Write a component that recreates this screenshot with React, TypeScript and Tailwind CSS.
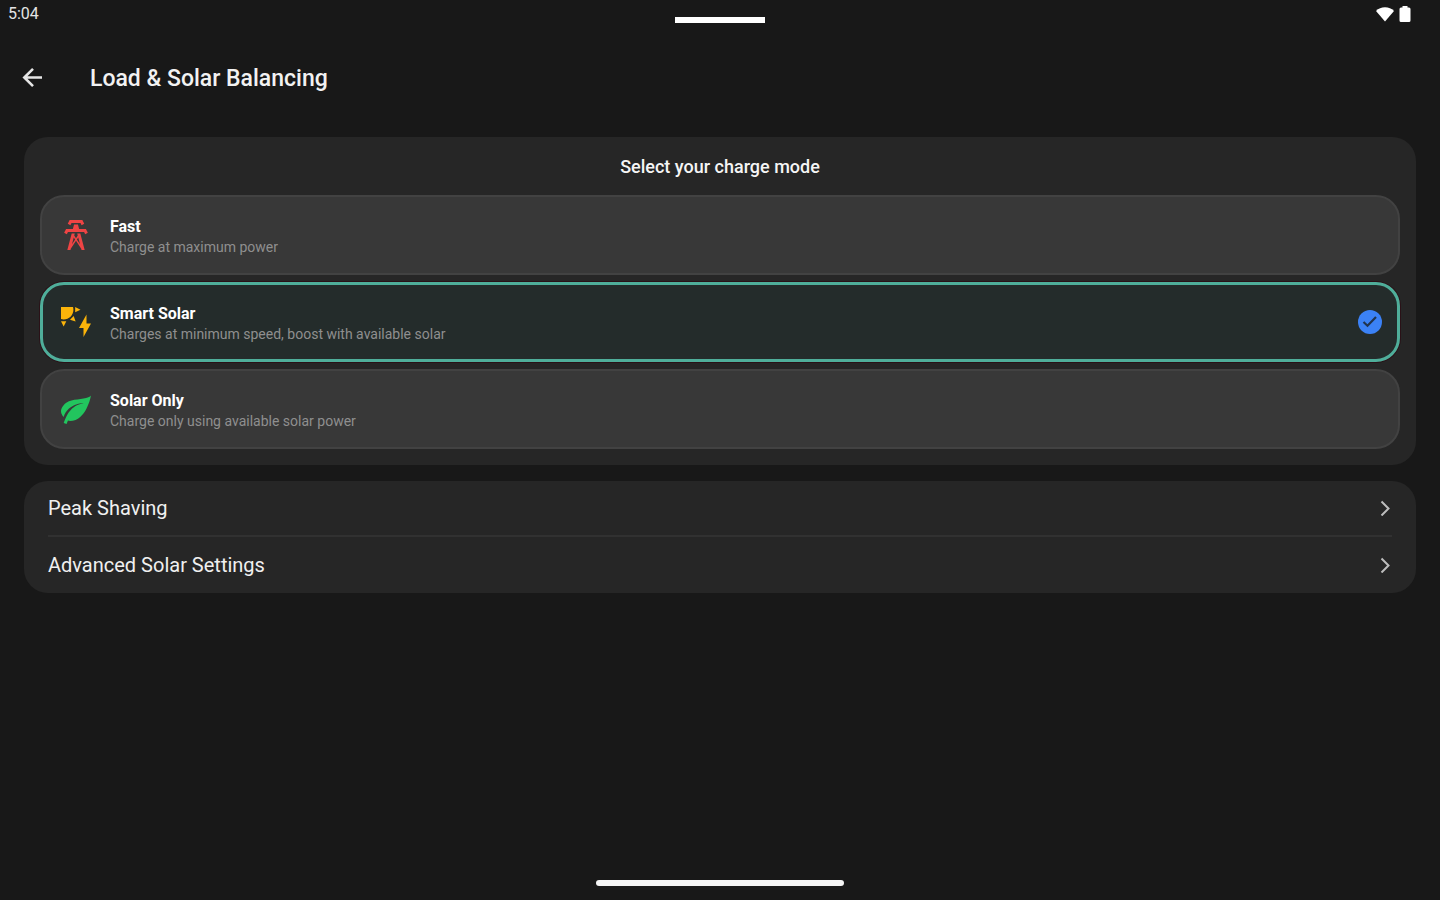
import { useState } from "react";

type Mode = {
  id: string;
  title: string;
  detail: string;
  color: string;
  path: string;
};

const modes: Mode[] = [
  {
    id: "fast",
    title: "Fast",
    detail: "Charge at maximum power",
    color: "text-[#ef4444]",
    path: "M8.28,5.45L6.5,4.55L7.76,2H16.23L17.5,4.55L15.72,5.44L15,4H9L8.28,5.45M18.62,8H14.09L13.3,5H10.7L9.91,8H5.38L4.1,10.55L5.89,11.44L6.62,10H17.38L18.1,11.45L19.89,10.56L18.62,8M17.77,22H15.7L15.46,21.1L12,15.9L8.53,21.1L8.3,22H6.23L9.12,11H11.19L10.83,12.35L12,14.1L13.16,12.35L12.81,11H14.88L17.77,22M11.4,15L10.5,13.65L9.32,18.13L11.4,15M14.68,18.12L13.5,13.64L12.6,15L14.68,18.12Z",
  },
  {
    id: "smart",
    title: "Smart Solar",
    detail: "Charges at minimum speed, boost with available solar",
    color: "text-[#fbb40a]",
    path: "M11.45,2V5.55L15,3.77L11.45,2M10.45,8L8,10.46L11.75,11.71L10.45,8M2,11.45L3.77,15L5.55,11.45H2M10,2H2V10C2.57,10.17 3.17,10.25 3.77,10.25C7.35,10.26 10.26,7.35 10.27,3.75C10.26,3.16 10.17,2.57 10,2M17,22V16H14L19,7V13H22L17,22Z",
  },
  {
    id: "solar",
    title: "Solar Only",
    detail: "Charge only using available solar power",
    color: "text-[#22c55e]",
    path: "M17,8C8,10 5.9,16.17 3.82,21.34L5.71,22L6.66,19.7C7.14,19.87 7.64,20 8,20C19,20 22,3 22,3C21,5 14,5.25 9,6.25C4,7.25 2,11.5 2,13.5C2,15.5 3.75,17.25 3.75,17.25C7,8 17,8 17,8Z",
  },
];

function StatusBar() {
  return (
    <div className="grid h-7 grid-cols-3 items-center px-2">
      <span className="text-base leading-7 text-[#e4e4e4]">5:04</span>
      <span className="mt-3 h-1.5 w-[90px] justify-self-center bg-white" />
      <span className="mr-4 flex items-center justify-self-end text-white">
        <svg className="h-4 w-5" viewBox="0 0 20 16" fill="currentColor" aria-hidden="true">
          <path d="M0 5C2.400 2.600 5.500 1.300 9 1.300S15.600 2.600 18 5L9 15.500Z" />
        </svg>
        <svg className="h-5 w-5" viewBox="0 0 20 20" fill="currentColor" aria-hidden="true">
          <path d="M6.500 2h5v1.500h1.500a1.500 1.500 0 0 1 1.500 1.500v11.500a1.500 1.500 0 0 1-1.500 1.500H5a1.500 1.500 0 0 1-1.500-1.500V5A1.500 1.500 0 0 1 5 3.500h1.500Z" />
        </svg>
      </span>
    </div>
  );
}

function ModeOption({ mode, selected, onSelect }: { mode: Mode; selected: boolean; onSelect: () => void }) {
  return (
    <label
      className={
        selected
          ? "flex h-20 cursor-pointer items-center rounded-3xl border-3 border-[#4fae9a] bg-[#242c2b] px-[15px] ring-1 ring-[#2a1117]"
          : "flex h-20 cursor-pointer items-center rounded-3xl border-2 border-[#424242] bg-[#383838] px-4"
      }
    >
      <input
        type="radio"
        name="charge-mode"
        value={mode.id}
        checked={selected}
        onChange={onSelect}
        className="h-0 w-0 appearance-none"
      />
      <svg className={`size-9 shrink-0 ${mode.color}`} viewBox="0 0 24 24" fill="currentColor" aria-hidden="true">
        <path d={mode.path} />
      </svg>
      <span className="ml-4 flex grow flex-col pt-1">
        <span className="text-base leading-[21px] font-bold text-white">{mode.title}</span>
        <span className="text-sm leading-[21px] text-[#8f8f8f]">{mode.detail}</span>
      </span>
      {selected && (
        <svg className="size-6 shrink-0" viewBox="0 0 24 24" fill="none" aria-hidden="true">
          <circle cx="12" cy="12" r="12" fill="#3b82f6" />
          <path d="M5.500 12l4 3.700 8.500-8.700" stroke="#20344f" strokeWidth="2.200" />
        </svg>
      )}
    </label>
  );
}

function SettingsLink({ label }: { label: string }) {
  return (
    <a href="#" className="flex h-14 items-center justify-between text-xl leading-7 text-[#f0f0f0]">
      {label}
      <svg className="h-4 w-4" viewBox="0 0 16 16" fill="none" stroke="#bdbdbd" strokeWidth="2" aria-hidden="true">
        <path d="M5.500 1.500l7 7-7 7" />
      </svg>
    </a>
  );
}

export default function App() {
  const [selected, setSelected] = useState("smart");

  return (
    <div className="flex min-h-screen flex-col bg-[#181818] font-['Roboto',sans-serif]">
      <StatusBar />
      <header className="flex h-[100px] items-center pl-5">
        <button type="button" aria-label="Back" className="flex size-6 items-center justify-center text-[#e6e6e6]">
          <svg className="size-6" viewBox="0 0 24 24" fill="none" stroke="currentColor" strokeWidth="2.600" aria-hidden="true">
            <path d="M22 11.500H4.500M13 2.800L4.300 11.500l8.700 8.700" />
          </svg>
        </button>
        <h1 className="ml-[46px] pt-0.5 text-[23px] leading-8 font-medium text-[#f2f2f2]">Load &amp; Solar Balancing</h1>
      </header>
      <main className="flex grow flex-col gap-4 px-6 pt-[9px]">
        <section className="rounded-3xl bg-[#262626] p-4">
          <h2 id="mode-heading" className="text-center text-lg leading-7 font-medium text-[#f5f5f5]">
            Select your charge mode
          </h2>
          <div role="radiogroup" aria-labelledby="mode-heading" className="mt-3.5 flex flex-col gap-[7px]">
            {modes.map((mode) => (
              <ModeOption
                key={mode.id}
                mode={mode}
                selected={selected === mode.id}
                onSelect={() => setSelected(mode.id)}
              />
            ))}
          </div>
        </section>
        <nav className="divide-y-2 divide-[#313131] rounded-3xl bg-[#262626] px-6">
          <SettingsLink label="Peak Shaving" />
          <SettingsLink label="Advanced Solar Settings" />
        </nav>
      </main>
      <div className="mb-3.5 h-1.5 w-[248px] self-center rounded-full bg-[#f4f4f4]" />
    </div>
  );
}
